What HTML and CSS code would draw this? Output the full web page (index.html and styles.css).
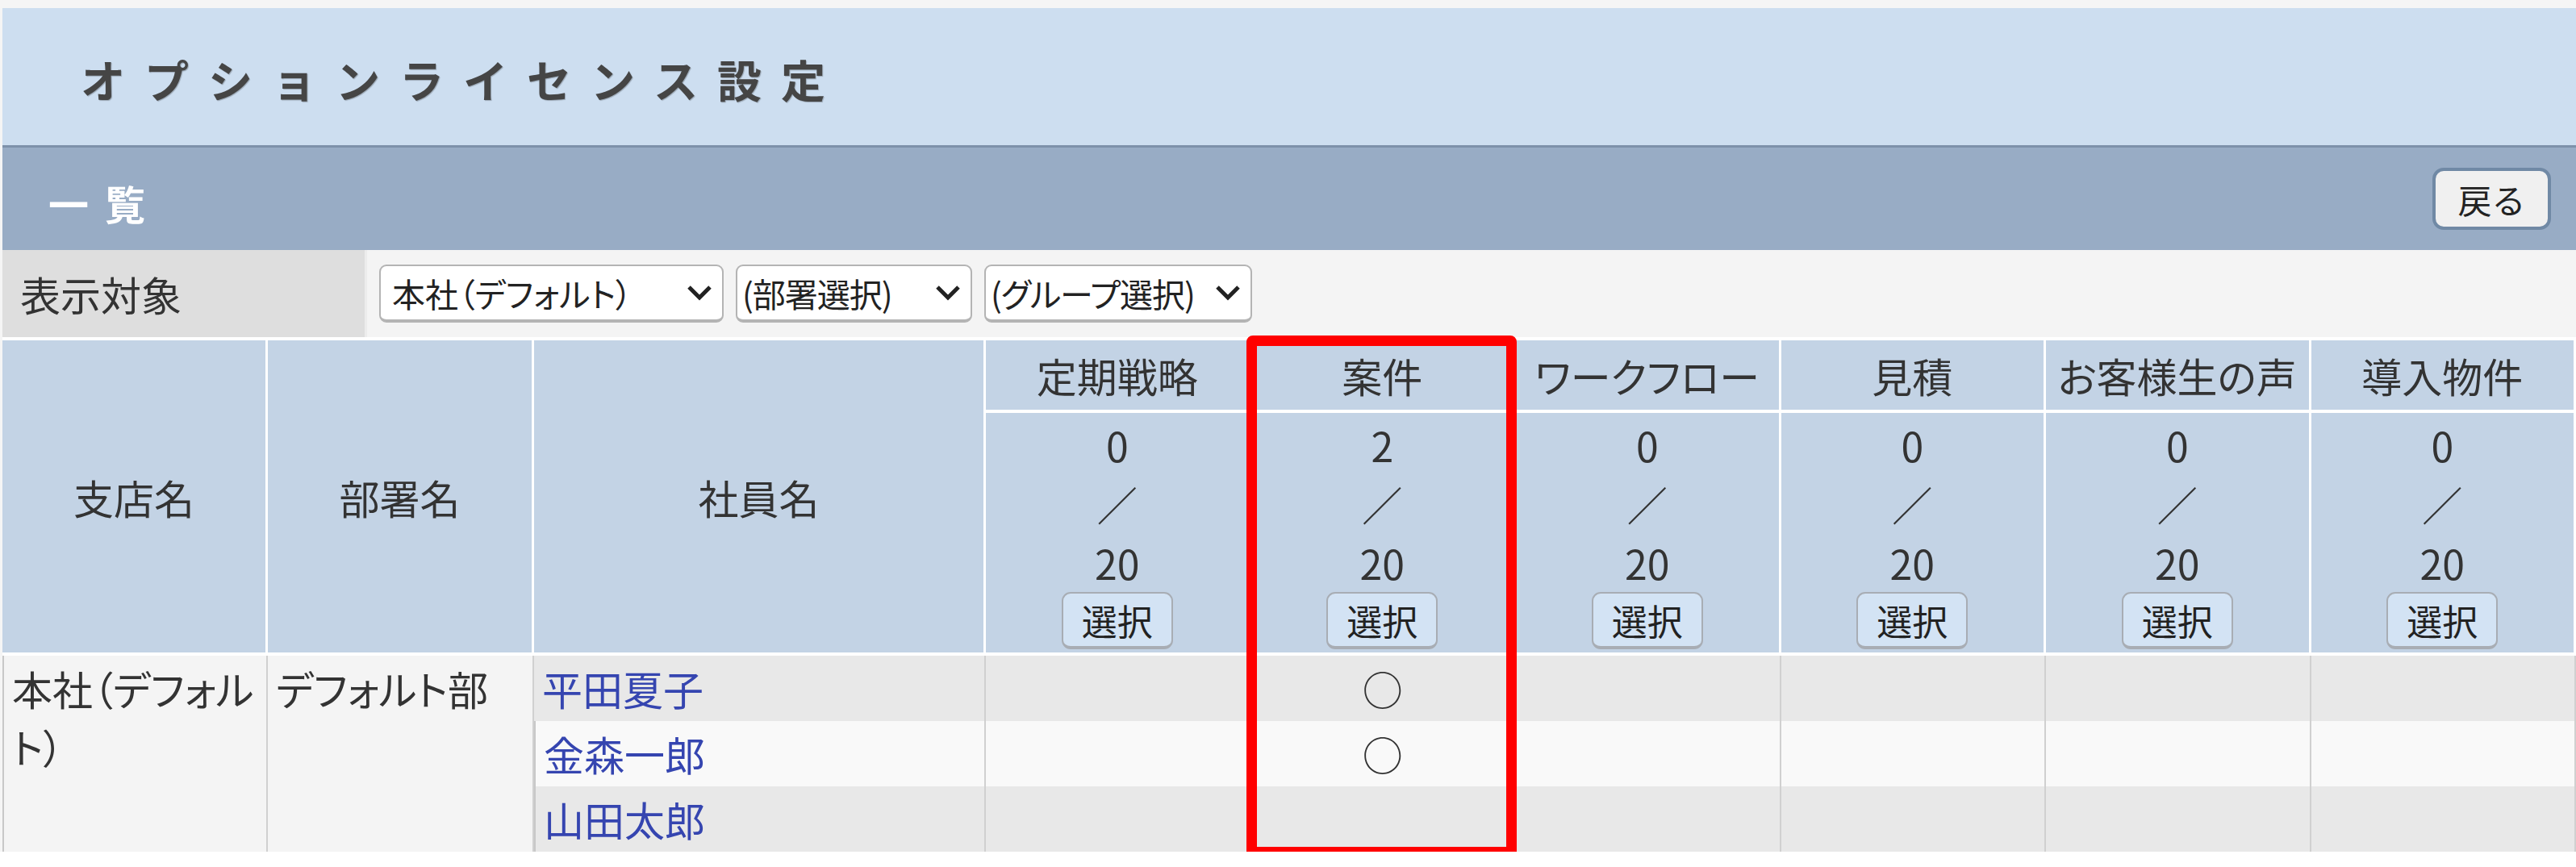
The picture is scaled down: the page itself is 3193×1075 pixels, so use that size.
FILE: index.html
```html
<!DOCTYPE html>
<html lang="ja">
<head>
  <meta charset="UTF-8">
  <meta name="viewport" content="width=device-width, initial-scale=1.0">
  <title>オプションライセンス設定</title>
  <link rel="stylesheet" href="styles.css">
</head>
<body>
  <div class="page">
    <div class="title-bar">
      <h1>オプションライセンス設定</h1>
    </div>

    <div class="section-bar">
      <h2>一覧</h2>
      <button class="back-btn">戻る</button>
    </div>

    <div class="filter-row">
      <div class="filter-label">表示対象</div>
      <div class="filter-controls">
        <label class="select-box sel-branch">
          <select><option>本社（デフォルト）</option></select>
          <svg width="32" height="20" viewBox="0 0 32 20"><polyline points="3,3 16,16 29,3" fill="none" stroke="#222" stroke-width="5"/></svg>
        </label>
        <label class="select-box sel-dept">
          <select><option>(部署選択)</option></select>
          <svg width="32" height="20" viewBox="0 0 32 20"><polyline points="3,3 16,16 29,3" fill="none" stroke="#222" stroke-width="5"/></svg>
        </label>
        <label class="select-box sel-group">
          <select><option>(グループ選択)</option></select>
          <svg width="32" height="20" viewBox="0 0 32 20"><polyline points="3,3 16,16 29,3" fill="none" stroke="#222" stroke-width="5"/></svg>
        </label>
      </div>
    </div>

    <div class="list-wrap">
      <table class="license-table">
        <colgroup>
          <col class="c-branch">
          <col class="c-dept">
          <col class="c-name">
          <col class="c-opt"><col class="c-opt"><col class="c-opt">
          <col class="c-opt"><col class="c-opt"><col class="c-opt">
        </colgroup>
        <thead>
          <tr class="head-top">
            <th rowspan="2">支店名</th>
            <th rowspan="2">部署名</th>
            <th rowspan="2">社員名</th>
            <th>定期戦略</th>
            <th>案件</th>
            <th>ワークフロー</th>
            <th>見積</th>
            <th>お客様生の声</th>
            <th>導入物件</th>
          </tr>
          <tr class="head-count">
            <th>0<br>／<br>20<button class="pick-btn">選択</button></th>
            <th>2<br>／<br>20<button class="pick-btn">選択</button></th>
            <th>0<br>／<br>20<button class="pick-btn">選択</button></th>
            <th>0<br>／<br>20<button class="pick-btn">選択</button></th>
            <th>0<br>／<br>20<button class="pick-btn">選択</button></th>
            <th>0<br>／<br>20<button class="pick-btn">選択</button></th>
          </tr>
        </thead>
        <tbody>
          <tr class="row-odd">
            <td rowspan="3" class="group-cell">本社（デフォルト）</td>
            <td rowspan="3" class="group-cell">デフォルト部</td>
            <td class="name"><a href="#">平田夏子</a></td>
            <td></td><td class="mark">○</td><td></td><td></td><td></td><td></td>
          </tr>
          <tr class="row-even">
            <td class="name"><a href="#">金森一郎</a></td>
            <td></td><td class="mark">○</td><td></td><td></td><td></td><td></td>
          </tr>
          <tr class="row-odd">
            <td class="name"><a href="#">山田太郎</a></td>
            <td></td><td class="mark"></td><td></td><td></td><td></td><td></td>
          </tr>
        </tbody>
      </table>
      <div class="highlight"></div>
    </div>
  </div>
</body>
</html>
```

FILE: styles.css
```css
body {
  margin: 0;
  padding: 0;
  background-color: #fff;
  font-family: "Noto Sans CJK JP", "Noto Sans", sans-serif;
  color: #333;
  overflow: hidden;
}

.page {
  padding: 10px 0 0 3px;
  background-color: #f5f5f5;
}

/* タイトル */
.title-bar {
  height: 170px;
  background-color: #cddef0;
  border-bottom: 3px solid #7d91aa;
  display: flex;
  align-items: center;
  padding-left: 97px;
}

.title-bar h1 {
  margin: 4px 0 0;
  font-size: 55px;
  font-weight: bold;
  letter-spacing: 24px;
  color: #454545;
  text-shadow: 1px 1px 1px rgba(0, 0, 0, 0.25);
}

/* 一覧バー */
.section-bar {
  height: 127px;
  background-color: #98acc5;
  display: flex;
  align-items: center;
  justify-content: space-between;
  padding: 0 31px 0 57px;
}

.section-bar h2 {
  margin: 8px 0 0;
  font-size: 50px;
  font-weight: bold;
  letter-spacing: 20px;
  color: #fff;
}

.back-btn {
  width: 147px;
  height: 77px;
  font-family: inherit;
  font-size: 42px;
  color: #222;
  background-color: #f0f0f0;
  border: 4px solid #7089a5;
  border-radius: 14px;
  padding: 0;
  cursor: pointer;
}

/* 表示対象 */
.filter-row {
  display: flex;
  height: 108px;
}

.filter-label {
  width: 427px;
  padding-left: 22px;
  background-color: #dedede;
  border-right: 3px solid #ececec;
  font-size: 50px;
  display: flex;
  align-items: center;
}

.filter-controls {
  flex: 1;
  display: flex;
  align-items: center;
  gap: 15px;
  padding-left: 15px;
  background-color: #f4f4f4;
}

.select-box {
  position: relative;
  display: block;
  height: 72px;
}

.select-box select {
  appearance: none;
  -webkit-appearance: none;
  width: 100%;
  height: 100%;
  margin: 0;
  padding: 0 0 0 14px;
  font-family: inherit;
  font-size: 41px;
  font-feature-settings: "palt";
  color: #222;
  background-color: #fff;
  border: 2px solid #b4b4b4;
  border-bottom-width: 4px;
  border-radius: 9px;
}

.sel-dept select,
.sel-group select {
  padding-left: 6px;
  letter-spacing: -1px;
}

.select-box svg {
  position: absolute;
  right: 14px;
  top: 25px;
  pointer-events: none;
}

.sel-branch { width: 427px; }
.sel-dept { width: 293px; }
.sel-group { width: 332px; }

/* 一覧表 */
.list-wrap {
  position: relative;
}

.license-table {
  width: 3190px;
  table-layout: fixed;
  border-collapse: separate;
  border-spacing: 0;
  font-size: 50px;
  font-feature-settings: "palt";
}

.c-branch { width: 329px; }
.c-dept { width: 330px; }
.c-name { width: 560px; }
.c-opt { width: 328.5px; }

.license-table th {
  background-color: #c3d3e5;
  font-weight: normal;
  color: #333;
  line-height: 74px;
  border-right: 3px solid #fff;
  border-bottom: 4px solid #fff;
  padding: 0;
}

.head-top th {
  border-top: 4px solid #fff;
  padding: 6px 0;
}

.head-count th {
  line-height: 73px;
  padding: 3px 0 4px;
}

.pick-btn {
  display: block;
  margin: 0 auto;
  width: 138px;
  height: 71px;
  padding: 0;
  font-family: inherit;
  font-size: 44px;
  color: #222;
  background-color: #d3e3f4;
  border: 2px solid #a8adb4;
  border-bottom-width: 4px;
  border-radius: 11px;
  cursor: pointer;
}

.license-table td {
  height: 72px;
  line-height: 72px;
  padding: 4px 10px 5px;
  border-right: 2px solid #d0d0d0;
}

.license-table td:first-child {
  border-left: 2px solid #c8c8c8;
}

.row-odd td { background-color: #e8e8e8; }
.row-even td { background-color: #f9f9f9; }

.license-table td.group-cell {
  background-color: #f4f4f4;
  vertical-align: top;
  padding-right: 4px;
}

.name a {
  color: #3545b0;
  text-decoration: none;
}

.mark {
  text-align: center;
}

/* 注目枠 */
.highlight {
  position: absolute;
  left: 1542px;
  top: -2px;
  width: 335px;
  height: 647px;
  box-sizing: border-box;
  border: 13px solid #ff0000;
  border-radius: 8px;
  pointer-events: none;
}
```
